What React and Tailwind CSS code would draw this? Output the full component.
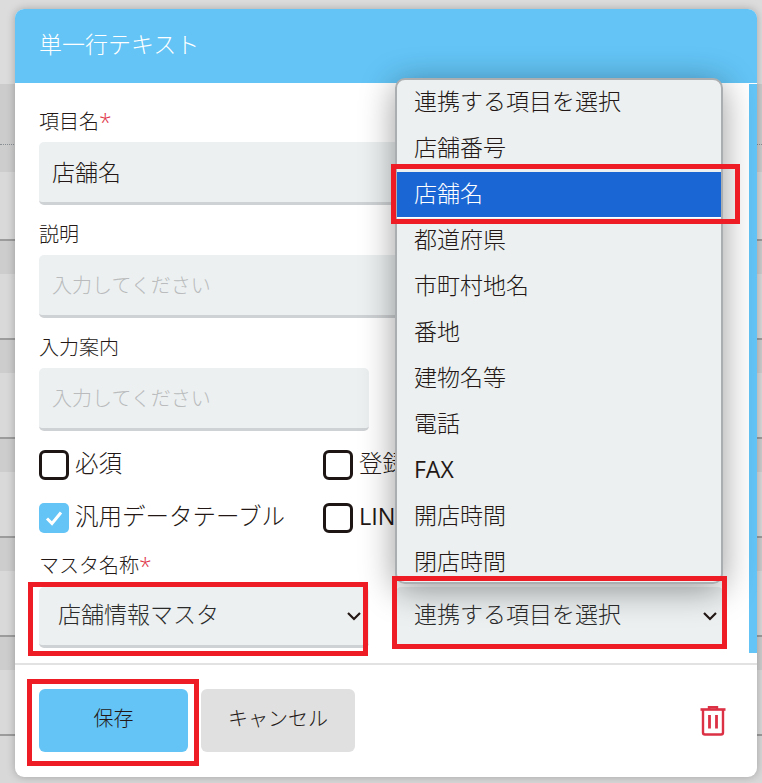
const options = ["連携する項目を選択","店舗番号","店舗名","都道府県","市町村地名","番地","建物名等","電話","FAX","開店時間","閉店時間"];

function Chevron() {
  return (
    <svg width="16" height="10" viewBox="0 0 16 10" fill="none" className="shrink-0">
      <path d="M2 2l6 6 6-6" stroke="#231815" strokeWidth="2.2" />
    </svg>
  );
}

function Star() {
  return <span className="text-[#e0354a] text-[23px] leading-[30px] h-[30px]">*</span>;
}

function Field({ label, required, value, placeholder, width }) {
  return (
    <div className={`mb-[14px] ${width}`}>
      <div className="h-[30px] mb-[6px] pt-[2px] flex items-center text-[20px] text-[#231815]">
        {label}
        {required && <Star />}
      </div>
      <div className={`h-[63px] bg-[#ecf0f1] border-b-[3px] border-[#cfd2d4] rounded-[5px] pl-[13px] flex items-center ${value ? "text-[23px] text-[#231815]" : "text-[20px] text-[#b9bbbc] pt-[2px]"}`}>
        {value || placeholder}
      </div>
    </div>
  );
}

function Check({ label, checked, width }) {
  return (
    <div className={`flex items-center h-[30px] ${width}`}>
      {checked ? (
        <span className="w-[30px] h-[30px] rounded-[5px] bg-[#63c4f5] flex items-center justify-center shrink-0">
          <svg width="18" height="16" viewBox="0 0 18 16" fill="none">
            <path d="M2 8.5l5 5 9-11" stroke="#fff" strokeWidth="3" />
          </svg>
        </span>
      ) : (
        <span className="w-[30px] h-[30px] rounded-[6px] border-[3px] border-[#1d1615] shrink-0" />
      )}
      <span className={`ml-[6px] pb-[3px] text-[23.5px] text-[#231815] whitespace-nowrap ${label === "LINE" ? "font-normal" : ""}`}>{label}</span>
    </div>
  );
}

function Select({ text, className }) {
  return (
    <div className={`h-[61px] bg-[#ecf0f1] border-b-[3px] border-[#cfd2d4] rounded-[5px] flex items-center justify-between text-[23px] text-[#2b2b2b] ${className}`}>
      <span className="pb-[4px]">{text}</span>
      <Chevron />
    </div>
  );
}

function RedBox({ className }) {
  return <div className={`absolute border-[5px] border-[#ee1c25] ${className}`} />;
}

export default function App() {
  return (
    <div className="relative w-[762px] h-[783px] overflow-hidden bg-[#d8d8d8] font-['Open_Sans','Noto_Sans_CJK_JP','Noto_Sans',sans-serif] font-light">
      <div className="flex flex-col">
        <div className="h-[84px] bg-[#dcdcdc]" />
        <div className="h-[61px] bg-[#cccccc] border-b border-dotted border-[#8a8f94]" />
        <div className="h-[27px] bg-[#cdcdcd]" />
        <div className="h-[69px] bg-[#d9d9d9] border-b-2 border-[#9c9c9c]" />
        {[0, 1, 2, 3, 4].map((i) => (
          <div key={i} className="h-[99px] flex flex-col border-b-2 border-[#9c9c9c]">
            <div className="h-[33px] bg-[#cdcdcd]" />
            <div className="flex-1 bg-[#d9d9d9]" />
          </div>
        ))}
      </div>

      <div className="absolute left-[15px] top-[9px] w-[742px] h-[768px] bg-white rounded-[9px] shadow-[0_0_8px_rgba(0,0,0,0.25)] flex flex-col overflow-hidden">
        <div className="h-[74px] shrink-0 bg-[#63c4f5] pl-[24px] pb-[4px] flex items-center text-[23px] text-white">
          単一行テキスト
        </div>
        <div className="h-[580px] shrink-0 flex">
          <div className="flex-1 pl-[24px] pt-[23px]">
            <Field label="項目名" required value="店舗名" width="w-[680px]" />
            <Field label="説明" placeholder="入力してください" width="w-[680px]" />
            <Field label="入力案内" placeholder="入力してください" width="w-[330px]" />
            <div className="mt-[19px] flex flex-col gap-[23px]">
              <div className="flex">
                <Check label="必須" width="w-[284px]" />
                <Check label="登録" />
              </div>
              <div className="flex">
                <Check label="汎用データテーブル" checked width="w-[284px]" />
                <Check label="LINE" />
              </div>
            </div>
            <div className="mt-[17px] h-[30px] mb-[7px] pt-[2px] flex items-center text-[20px] text-[#231815]">
              マスタ名称<Star />
            </div>
            <div className="flex gap-[27px]">
              <Select text="店舗情報マスタ" className="w-[330px] pl-[19px] pr-[7px]" />
              <Select text="連携する項目を選択" className="w-[327px] pl-[18px] pr-[5px]" />
            </div>
          </div>
          <div className="w-[8px] shrink-0 mt-px mb-[10px] bg-[#63c4f5]" />
        </div>
        <div className="flex-1 border-t-2 border-[#e2e2e2] pl-[24px] pr-[30px] pt-[24px] flex items-start">
          <button className="w-[149px] h-[63px] pb-[4px] rounded-[6px] bg-[#63c4f5] text-[20px] text-[#231815] font-light">保存</button>
          <button className="ml-[13px] w-[154px] h-[63px] pb-[4px] rounded-[6px] bg-[#e0e0e0] text-[20px] text-[#231815] font-light">キャンセル</button>
          <svg width="28" height="32" viewBox="0 0 28 32" fill="none" className="ml-auto mt-[15px]">
            <path d="M1.5 5.5h25" stroke="#dc3045" strokeWidth="2.6" />
            <path d="M10 5V3.2h8V5" stroke="#dc3045" strokeWidth="2.4" />
            <path d="M4 6v22.5a2 2 0 0 0 2 2h16a2 2 0 0 0 2-2V6" stroke="#dc3045" strokeWidth="2.4" />
            <path d="M10.5 11v13.5M17.5 11v13.5" stroke="#dc3045" strokeWidth="2.8" />
          </svg>
        </div>
      </div>

      <div className="absolute left-[395px] top-[78px] w-[328px] h-[506px] bg-[#ecf0f1] border-2 border-[#abaeb0] rounded-[10px] shadow-[0_6px_34px_rgba(0,0,0,0.4)] overflow-hidden text-[23px] text-[#231815]">
        {options.map((o) => (
          <div key={o} className={`h-[46px] pl-[17px] flex items-center ${o === "店舗名" ? "bg-[#1a66d4] text-white border-b border-white pb-[2px]" : "pb-[4px]"} ${o === "FAX" ? "font-normal" : ""}`}>
            {o}
          </div>
        ))}
      </div>

      <RedBox className="left-[391px] top-[164px] w-[349px] h-[60px]" />
      <RedBox className="left-[28px] top-[582px] w-[340px] h-[74px]" />
      <RedBox className="left-[392px] top-[576px] w-[335px] h-[73px]" />
      <RedBox className="left-[27px] top-[679px] w-[172px] h-[87px]" />
    </div>
  );
}
